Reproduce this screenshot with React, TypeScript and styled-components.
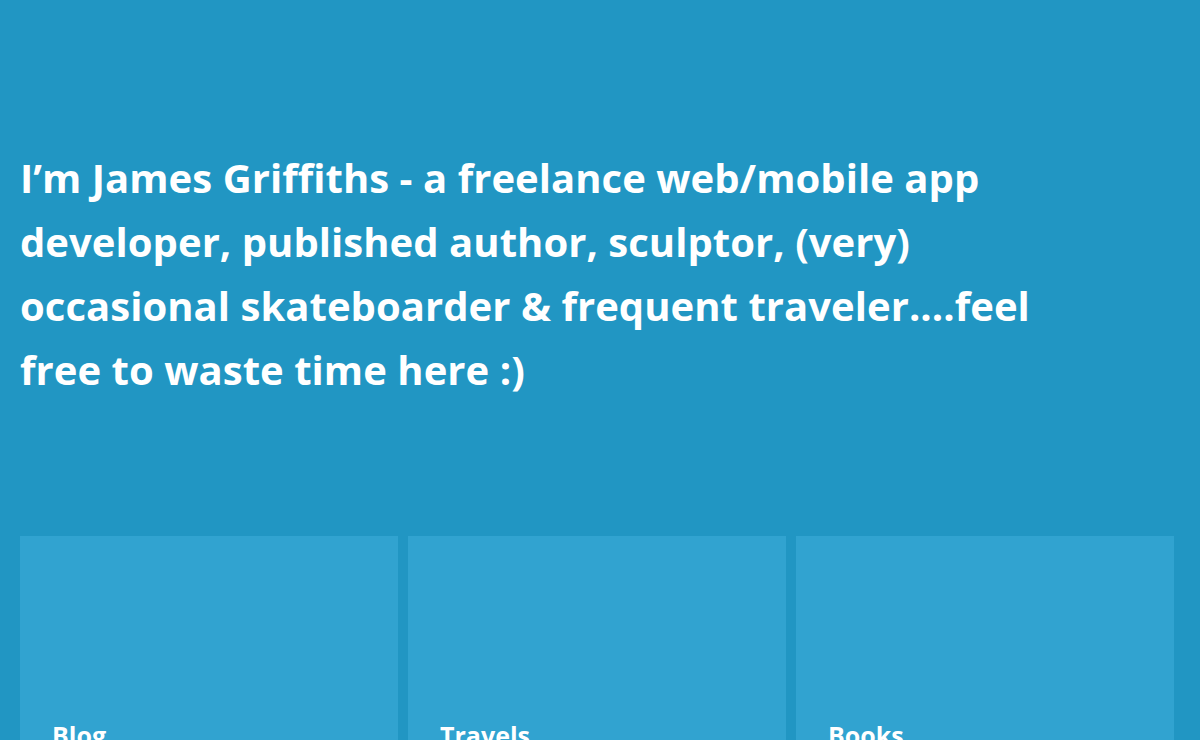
import React from "react";
import styled, { createGlobalStyle } from "styled-components";

const Global = createGlobalStyle`
  html, body { margin: 0; padding: 0; background: #2196c3; }
  body { font-family: "Open Sans", sans-serif; overflow: hidden; }
`;

const Page = styled.div`
  min-height: 740px;
  background: #2196c3;
  padding: 146px 26px 0 20px;
  box-sizing: border-box;
`;

const Intro = styled.h1`
  margin: 0;
  max-width: 1040px;
  color: #ffffff;
  font-family: "Open Sans", sans-serif;
  font-weight: 700;
  font-size: 40px;
  line-height: 64px;
  letter-spacing: 0.05px;
`;

const Grid = styled.div`
  margin-top: 134px;
  display: grid;
  grid-template-columns: repeat(3, 1fr);
  gap: 10px;
`;

const Card = styled.a`
  display: block;
  height: 250px;
  padding: 182px 32px 0;
  box-sizing: border-box;
  background: #31a3d0;
  color: #ffffff;
  text-decoration: none;
`;

const CardTitle = styled.h2`
  margin: 0;
  font-family: "Open Sans", sans-serif;
  font-weight: 700;
  font-size: 25px;
  line-height: 34px;
`;

export default function App() {
  return (
    <>
      <Global />
      <Page>
        <Intro>
          I’m James Griffiths - a freelance web/mobile app developer, published author, sculptor, (very) occasional skateboarder &amp; frequent traveler....feel free to waste time here :)
        </Intro>
        <Grid>
          {["Blog", "Travels", "Books"].map((t) => (
            <Card key={t} href="#">
              <CardTitle>{t}</CardTitle>
            </Card>
          ))}
        </Grid>
      </Page>
    </>
  );
}
